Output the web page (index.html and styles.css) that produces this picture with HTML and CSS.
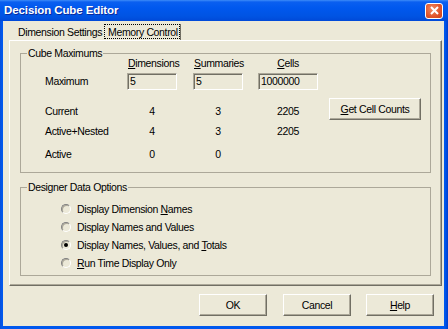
FILE: index.html
```html
<!DOCTYPE html>
<html>
<head>
<meta charset="utf-8">
<link rel="stylesheet" href="styles.css">
</head>
<body>
<div class="window">
  <div class="titlebar">
    <span class="title">Decision Cube Editor</span>
    <span class="close"><svg width="9" height="9" viewBox="0 0 9 9"><path d="M1 1L8 8M8 1L1 8" stroke="#fff" stroke-width="2"/></svg></span>
  </div>
  <div class="client">
    <div class="tabs">
      <span class="tab">Dimension Settings</span>
      <span class="tab active"><span class="focus">Memory Control</span></span>
    </div>
    <div class="page">
      <fieldset class="group cube">
        <legend>Cube Maximums</legend>
        <div class="grid">
          <span></span>
          <span class="hdr"><u>D</u>imensions</span>
          <span class="hdr"><u>S</u>ummaries</span>
          <span class="hdr center"><u>C</u>ells</span>
          <span></span>

          <span class="lbl">Maximum</span>
          <span class="edit w50">5</span>
          <span class="edit w50">5</span>
          <span class="edit w60">1000000</span>
          <span></span>

          <span class="lbl">Current</span>
          <span class="val w50">4</span>
          <span class="val w50">3</span>
          <span class="val w60">2205</span>
          <span class="btn getcc"><span><u>G</u>et Cell Counts</span></span>

          <span class="lbl">Active+Nested</span>
          <span class="val w50">4</span>
          <span class="val w50">3</span>
          <span class="val w60">2205</span>
          <span></span>

          <span class="lbl">Active</span>
          <span class="val w50">0</span>
          <span class="val w50">0</span>
          <span></span>
          <span></span>
        </div>
      </fieldset>
      <fieldset class="group">
        <legend>Designer Data Options</legend>
        <div class="radios">
          <div class="radio"><span class="dot"></span><span>Display Dimension <u>N</u>ames</span></div>
          <div class="radio"><span class="dot"></span><span>Display Names and Values</span></div>
          <div class="radio"><span class="dot checked"></span><span>Display Names, Values, and <u>T</u>otals</span></div>
          <div class="radio"><span class="dot"></span><span><u>R</u>un Time Display Only</span></div>
        </div>
      </fieldset>
    </div>
    <div class="buttons">
      <span class="btn ok">OK</span>
      <span class="btn">Cancel</span>
      <span class="btn"><span><u>H</u>elp</span></span>
    </div>
  </div>
</div>
</body>
</html>
```

FILE: styles.css
```css
html, body {
  margin: 0;
  padding: 0;
  background: #0055e5;
}
body {
  font-family: "Liberation Sans", sans-serif;
  font-size: 10.5px;
  letter-spacing: -0.35px;
  line-height: 13px;
  color: #000;
  white-space: nowrap;
}
.window {
  width: 448px;
  height: 329px;
  box-sizing: border-box;
  display: flex;
  flex-direction: column;
  background: linear-gradient(to right, #0a4fd8, #0058ee 2px, #0058ee 445px, #003ccc);
  padding: 0 4px 3px 3px;
}
.titlebar {
  height: 21px;
  margin: 0 -4px 0 -3px;
  padding: 0 5px 0 4px;
  display: flex;
  align-items: center;
  justify-content: space-between;
  background: linear-gradient(to bottom, #3d8cf8 0, #0a5ff0 2px, #0058ee 8px, #0054e3 16px, #0049d8 21px);
}
.title {
  color: #fff;
  font-family: "Liberation Sans", sans-serif;
  font-weight: bold;
  font-size: 11.5px;
  letter-spacing: -0.1px;
  text-shadow: 1px 1px 0 #0a2a9c;
}
.close {
  width: 18px;
  height: 16px;
  box-sizing: border-box;
  border: 1px solid #fff;
  border-radius: 3px;
  background: radial-gradient(circle at 40% 35%, #f08a64, #e0542a 60%, #c8401c);
  display: flex;
  align-items: center;
  justify-content: center;
}
.client {
  flex: 1;
  background: #ece9d8;
  display: flex;
  flex-direction: column;
}
.tabs {
  height: 19px;
  display: flex;
  align-items: flex-end;
  padding-left: 15px;
}
.tab {
  height: 16px;
  line-height: 16px;
  width: 86px;
}
.tab.active {
  width: auto;
  height: 16px;
  border-right: 1px solid #716f64;
}
.focus {
  display: block;
  height: 15px;
  line-height: 14px;
  box-sizing: border-box;
  width: 76px;
  border: 1px dotted #000;
  padding-left: 3px;
}
.page {
  margin: 0 2px 0 6px;
  border-top: 1px solid #fff;
  border-left: 1px solid #fff;
  border-right: 1px solid #716f64;
  border-bottom: 1px solid #716f64;
  box-shadow: inset -1px -1px 0 #aca899;
  padding: 6px 10px 9px 10px;
  display: flex;
  flex-direction: column;
  gap: 8px;
}
.group {
  margin: 0;
  padding: 0;
  border: 1px solid #aca899;
  min-width: 0;
}
.group legend {
  margin-left: 6px;
  padding: 0 1px;
  line-height: 13px;
}
.grid {
  display: grid;
  grid-template-columns: 106px 66px 65px 71px 92px;
  grid-template-rows: 7px 29px 30px 11px 35px;
  align-items: center;
}
.hdr {
  line-height: 7px;
  padding-left: 1px;
}
.hdr.center {
  width: 60px;
  text-align: center;
  padding-left: 0;
}
.lbl {
  padding-left: 24px;
}
.edit {
  height: 17px;
  box-sizing: border-box;
  border-top: 1px solid #aca899;
  border-left: 1px solid #aca899;
  border-right: 1px solid #fff;
  border-bottom: 1px solid #fff;
  box-shadow: inset 1px 1px 0 #716f64;
  padding-left: 2px;
  line-height: 14px;
}
.w50 { width: 50px; }
.w60 { width: 60px; }
.val {
  text-align: center;
}
.btn {
  height: 22px;
  box-sizing: border-box;
  border-top: 1px solid #fff;
  border-left: 1px solid #fff;
  border-right: 1px solid #716f64;
  border-bottom: 1px solid #716f64;
  box-shadow: inset -1px -1px 0 #aca899;
  display: flex;
  align-items: center;
  justify-content: center;
  width: 68px;
}
.getcc {
  width: 92px;
  align-self: start;
  margin-top: 2px;
}
.radios {
  padding: 6px 0 3px 40px;
}
.radio {
  height: 18px;
  display: flex;
  align-items: center;
}
.dot {
  width: 10px;
  height: 10px;
  box-sizing: border-box;
  border-radius: 50%;
  border: 1px solid;
  border-color: #808080 #fff #fff #808080;
  box-shadow: inset 1px 1px 0 #aca899;
  margin-right: 6px;
  display: flex;
  align-items: center;
  justify-content: center;
}
.dot.checked::after {
  content: "";
  width: 4px;
  height: 4px;
  border-radius: 50%;
  background: #000;
}
.buttons {
  display: flex;
  justify-content: flex-end;
  gap: 15px;
  padding: 8px 10px 0 0;
}
.btn.ok {
  margin-right: 1px;
}
```
